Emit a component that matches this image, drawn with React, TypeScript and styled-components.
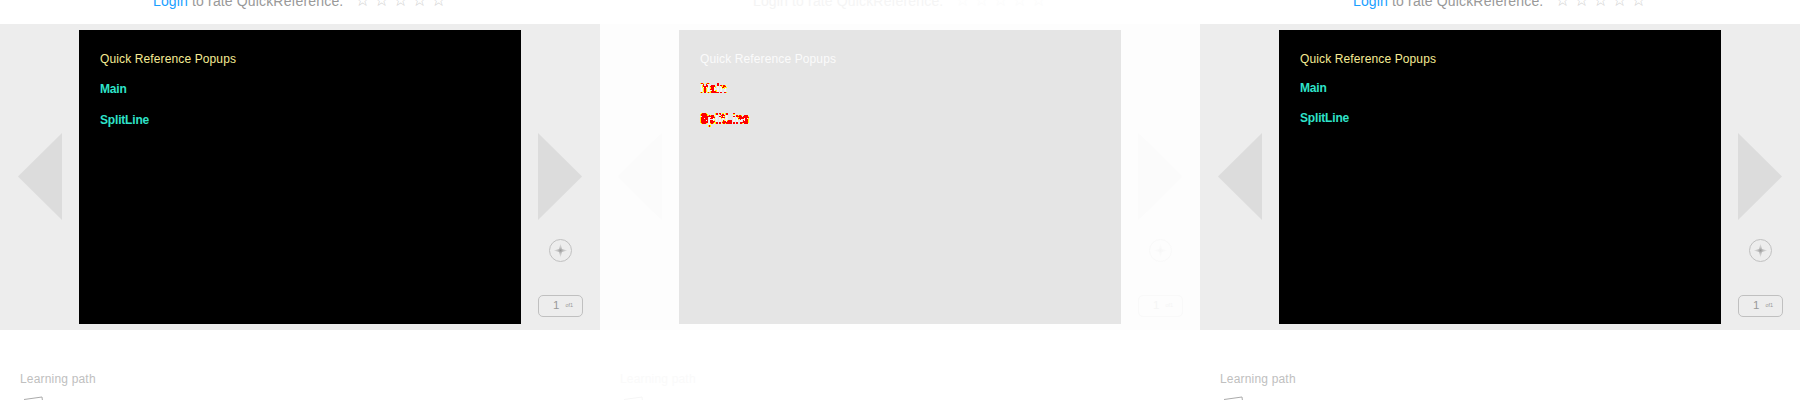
import React from "react";
import styled, { createGlobalStyle } from "styled-components";

const Global = createGlobalStyle`
  body { margin: 0; background: #fff; font-family: "Liberation Sans", Arial, sans-serif; }
  * { box-sizing: border-box; }
`;

const Comparison = styled.main`
  display: flex;
  width: 1800px;
  height: 400px;
  overflow: hidden;
`;

const Page = styled.section`
  width: 600px;
  height: 400px;
  overflow: hidden;
  background: #fff;
`;

const Rating = styled.header<{ $diff?: boolean }>`
  display: flex;
  height: 24px;
  padding-left: 153px;
  font-size: 14px;
  line-height: 16px;
  letter-spacing: 0.15px;
  white-space: pre;
  color: ${(p) => (p.$diff ? "#f5f5f5" : "#999")};
`;

const RatingText = styled.div`
  width: 202px;
  margin-top: -7px;
`;

const Login = styled.span<{ $diff?: boolean }>`
  color: ${(p) => (p.$diff ? "#f4f4f4" : "#1a9fff")};
`;

const Stars = styled.div<{ $diff?: boolean }>`
  display: flex;
  margin-top: -8px;
  font: 17px/16px "DejaVu Sans", sans-serif;
  color: ${(p) => (p.$diff ? "#fbfbfb" : "#d4d4d4")};
  span { width: 19px; }
`;

const Viewer = styled.div<{ $diff?: boolean }>`
  display: flex;
  height: 306px;
  padding: 6px 0;
  background: ${(p) => (p.$diff ? "#fdfdfd" : "#ededed")};
`;

const Side = styled.div<{ $right?: boolean }>`
  display: flex;
  flex-direction: column;
  width: 79px;
  padding: 103px 0 0 ${(p) => (p.$right ? "17px" : "18px")};
  svg { display: block; }
`;

const Slide = styled.article<{ $diff?: boolean }>`
  width: 442px;
  height: 294px;
  padding: 22px 21px;
  font-size: 12px;
  line-height: 14px;
  background: ${(p) => (p.$diff ? "#e5e5e5" : "#000")};
`;

const SlideTitle = styled.div<{ $diff?: boolean }>`
  color: ${(p) => (p.$diff ? "#fbfbfb" : "#f5eb94")};
  letter-spacing: 0.12px;
`;

const Entry = styled.div<{ $gap: number; $diff?: boolean; $marks?: string }>`
  margin-top: ${(p) => p.$gap}px;
  font-weight: bold;
  letter-spacing: -0.18px;
  color: ${(p) => (p.$diff ? "#f5f5f5" : "#2fe3ca")};
  ${(p) => (p.$marks ? `filter: url(#${p.$marks});` : "")}
`;

const Target = styled.svg`
  margin: 17px 0 0 10px;
`;

const Counter = styled.div<{ $diff?: boolean }>`
  display: flex;
  align-items: center;
  width: 45px;
  height: 22px;
  flex: none;
  margin-top: 33px;
  padding: 0 0 2px 14px;
  border: 1px solid ${(p) => (p.$diff ? "#f9f9f9" : "#c0c0c0")};
  border-radius: 5px;
  font-size: 11.5px;
  color: ${(p) => (p.$diff ? "#f5f5f5" : "#999")};
  small { margin-left: 6px; font-size: 5.5px; }
`;

const Learning = styled.footer<{ $diff?: boolean }>`
  padding: 42px 0 0 20px;
  font-size: 12px;
  line-height: 14px;
  letter-spacing: 0.18px;
  color: ${(p) => (p.$diff ? "#fafafa" : "#c0c0c0")};
  svg { display: block; margin: 10px 0 0 4px; }
`;

const FilterDefs = styled.svg`
  display: block;
  width: 0;
  height: 0;
`;

/* Marks the pixels that change when a text moves up by `shift` pixels:
   the rim of the changed area in yellow, its interior in red. */
function ShiftMarks({ id, shift }: { id: string; shift: number }) {
  return (
    <filter id={id} x="-5%" y="-30%" width="110%" height="160%" colorInterpolationFilters="sRGB">
      <feOffset in="SourceAlpha" dy={-shift} result="moved" />
      <feComposite in="SourceAlpha" in2="moved" operator="arithmetic" k2="1" k3="-1" result="lost" />
      <feComposite in="moved" in2="SourceAlpha" operator="arithmetic" k2="1" k3="-1" result="gained" />
      <feComposite in="lost" in2="gained" operator="arithmetic" k2="1" k3="1" result="change" />
      <feComponentTransfer in="change" result="any">
        <feFuncA type="discrete" tableValues="0 1 1 1 1 1 1 1 1 1 1 1 1 1 1 1 1 1 1 1" />
      </feComponentTransfer>
      <feComponentTransfer in="change" result="strong">
        <feFuncA type="discrete" tableValues="0 0 0 0 0 1 1 1 1 1" />
      </feComponentTransfer>
      <feMorphology in="any" operator="dilate" radius="1" result="grown" />
      <feMorphology in="grown" operator="erode" radius="2" result="core" />
      <feComposite in="core" in2="any" operator="in" result="inner" />
      <feMerge result="hot">
        <feMergeNode in="strong" />
        <feMergeNode in="inner" />
      </feMerge>
      <feFlood floodColor="#ff0" />
      <feComposite in2="any" operator="in" result="yellow" />
      <feFlood floodColor="#f00" />
      <feComposite in2="hot" operator="in" result="red" />
      <feMerge>
        <feMergeNode in="SourceGraphic" />
        <feMergeNode in="yellow" />
        <feMergeNode in="red" />
      </feMerge>
    </filter>
  );
}

function Panel({ diff, gaps }: { diff?: boolean; gaps: [number, number] }) {
  const arrow = diff ? "#fbfbfb" : "#dcdcdc";
  const line = diff ? "#f9f9f9" : "#c0c0c0";
  const spark = diff ? "#f6f6f6" : "#999";
  const glow = diff ? "glow-diff" : "glow";
  return (
    <Page>
      <Rating $diff={diff}>
        <RatingText><Login $diff={diff}>Login</Login> to rate QuickReference.</RatingText>
        <Stars $diff={diff}>{[0, 1, 2, 3, 4].map((n) => <span key={n}>☆</span>)}</Stars>
      </Rating>
      <Viewer $diff={diff}>
        <Side>
          <svg width="44" height="88"><path d="M44 0V87L0 43.5Z" fill={arrow} /></svg>
        </Side>
        <Slide $diff={diff}>
          <SlideTitle $diff={diff}>Quick Reference Popups</SlideTitle>
          <Entry $gap={gaps[0]} $diff={diff} $marks={diff ? "shift-1" : undefined}>Main</Entry>
          <Entry $gap={gaps[1]} $diff={diff} $marks={diff ? "shift-2" : undefined}>SplitLine</Entry>
        </Slide>
        <Side $right>
          <svg width="44" height="88"><path d="M0 0V87L44 43.5Z" fill={arrow} /></svg>
          <Target width="24" height="24" fill="none">
            <radialGradient id={glow} gradientUnits="userSpaceOnUse" cx="12.5" cy="12.5" r="7">
              <stop offset="0" stopColor={spark} />
              <stop offset="0.35" stopColor={spark} stopOpacity="0.55" />
              <stop offset="1" stopColor={spark} stopOpacity="0.1" />
            </radialGradient>
            <circle cx="12.5" cy="12.5" r="11" stroke={line} />
            <path d="M12.5 5.5L14 11L19.5 12.5L14 14L12.5 19.5L11 14L5.5 12.5L11 11Z" fill={`url(#${glow})`} />
          </Target>
          <Counter $diff={diff}>1<small>of1</small></Counter>
        </Side>
      </Viewer>
      <Learning $diff={diff}>
        Learning path
        <svg width="30" height="20" fill="none" stroke={diff ? "#f6f6f6" : "#aaa"}><path d="M0 3.5L18 1L20 18" /></svg>
      </Learning>
    </Page>
  );
}

export default function App() {
  return (
    <>
      <Global />
      <Comparison>
        <Panel gaps={[16, 17]} />
        <Panel diff gaps={[16, 17]} />
        <Panel gaps={[15, 16]} />
      </Comparison>
      <FilterDefs>
        <ShiftMarks id="shift-1" shift={1} />
        <ShiftMarks id="shift-2" shift={2} />
      </FilterDefs>
    </>
  );
}
